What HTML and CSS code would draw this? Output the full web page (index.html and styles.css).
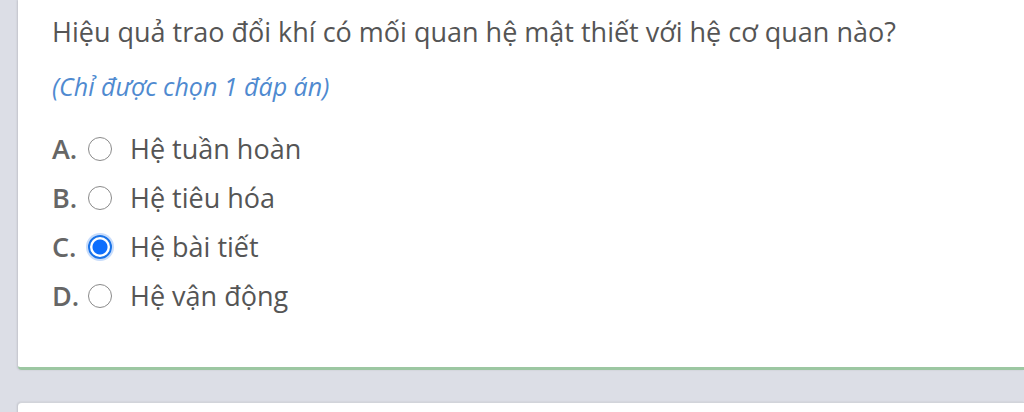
FILE: index.html
```html
<!DOCTYPE html>
<html>
<head lang="vi">
	<meta charset="UTF-8">
	<title>Câu hỏi</title>
	<link rel="stylesheet" href="styles.css">
</head>
<body>
<div class="page">
	<div class="card">
		<p class="question">Hiệu quả trao đổi khí có mối quan hệ mật thiết với hệ cơ quan nào?</p>
		<p class="hint">(Chỉ được chọn 1 đáp án)</p>
		<ul class="answers">
			<li><span class="letter">A.</span><span class="radio"></span><span class="label">Hệ tuần hoàn</span></li>
			<li><span class="letter">B.</span><span class="radio"></span><span class="label">Hệ tiêu hóa</span></li>
			<li class="checked"><span class="letter">C.</span><span class="radio"></span><span class="label">Hệ bài tiết</span></li>
			<li><span class="letter">D.</span><span class="radio"></span><span class="label">Hệ vận động</span></li>
		</ul>
	</div>
	<div class="card next"></div>
</div>
</body>
</html>
```

FILE: styles.css
```css
*{
	margin:0;
	padding:0;
	box-sizing:border-box;
}
body{
	background:#dcdee6;
	font-family:"Open Sans","Noto Sans",sans-serif;
	color:#555;
}
.page{
	padding-left:18px;
}
.card{
	background:#fff;
	border-bottom:3px solid #9cc7a2;
	border-radius:0 0 0 4px;
	box-shadow:-1px 0 2px rgba(0,0,0,0.12);
	padding:12px 34px 34px;
	height:370px;
}
.card.next{
	margin-top:32px;
	height:60px;
	border-bottom:none;
	border-top:1px solid #d2d4da;
	border-radius:4px 0 0 0;
}
.question{
	font-size:27px;
	line-height:40px;
}
.hint{
	font-size:25px;
	font-style:italic;
	color:#4f8ad0;
	margin-top:18px;
	line-height:32px;
}
.answers{
	list-style:none;
	margin-top:22px;
}
.answers li{
	display:flex;
	align-items:center;
	height:49px;
	font-size:27px;
}
.letter{
	width:36px;
	font-weight:600;
	color:#666;
}
.radio{
	width:24px;
	height:24px;
	border-radius:50%;
	border:1.5px solid #8a8a8a;
	margin-right:18px;
}
.checked .radio{
	border:2px solid #1a73e8;
	background:radial-gradient(circle,#0d6efd 0,#0d6efd 7px,#fff 8px);
	box-shadow:0 0 0 2px #c7dcfb;
}
```
